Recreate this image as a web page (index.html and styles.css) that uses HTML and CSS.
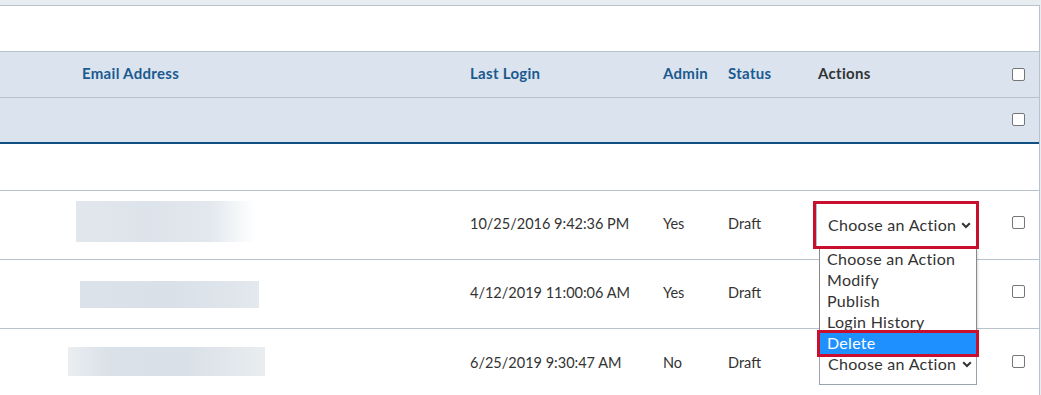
FILE: index.html
```html
<!DOCTYPE html>
<html lang="en">
<head>
<meta charset="utf-8">
<title>Users</title>
<link rel="stylesheet" href="styles.css">
</head>
<body>
<div class="page">
  <div class="topbar"></div>
  <div class="panel">
    <div class="spacer"></div>
    <div class="row head head-1">
      <div></div>
      <div class="th email">Email Address</div>
      <div class="th">Last Login</div>
      <div class="th">Admin</div>
      <div class="th">Status</div>
      <div class="th dark actions-h">Actions</div>
      <div class="cb-cell"><span class="cb"></span></div>
    </div>
    <div class="row head head-2">
      <div></div><div></div><div></div><div></div><div></div><div></div>
      <div class="cb-cell"><span class="cb"></span></div>
    </div>
    <div class="row blank"></div>
    <div class="row data">
      <div></div>
      <div class="blur-cell"><span class="blur b1"></span></div>
      <div class="td">10/25/2016 9:42:36 PM</div>
      <div class="td">Yes</div>
      <div class="td">Draft</div>
      <div class="act">
        <div class="focus-box">
          <div class="select open">
            <span class="sel-text">Choose an Action</span>
            <svg class="chev" width="10" height="7" viewBox="0 0 10 7"><path d="M1.2 1.2 L5 5 L8.8 1.2" fill="none" stroke="#333" stroke-width="2"/></svg>
          </div>
          <ul class="listbox">
            <li>Choose an Action</li>
            <li>Modify</li>
            <li>Publish</li>
            <li>Login History</li>
            <li class="hl">Delete</li>
          </ul>
        </div>
      </div>
      <div class="cb-cell"><span class="cb"></span></div>
    </div>
    <div class="row data">
      <div></div>
      <div class="blur-cell"><span class="blur b2"></span></div>
      <div class="td">4/12/2019 11:00:06 AM</div>
      <div class="td">Yes</div>
      <div class="td">Draft</div>
      <div class="act"></div>
      <div class="cb-cell"><span class="cb"></span></div>
    </div>
    <div class="row data last">
      <div></div>
      <div class="blur-cell"><span class="blur b3"></span></div>
      <div class="td">6/25/2019 9:30:47 AM</div>
      <div class="td">No</div>
      <div class="td">Draft</div>
      <div class="act">
        <div class="select plain">
          <span class="sel-text">Choose an Action</span>
          <svg class="chev" width="10" height="7" viewBox="0 0 10 7"><path d="M1.2 1.2 L5 5 L8.8 1.2" fill="none" stroke="#333" stroke-width="2"/></svg>
        </div>
      </div>
      <div class="cb-cell"><span class="cb"></span></div>
    </div>
  </div>
</div>
</body>
</html>
```

FILE: styles.css
```css
* { box-sizing: border-box; }
html, body { margin: 0; padding: 0; }
body {
  background: #e8edf1;
  font-family: "Lato", "Liberation Sans", sans-serif;
  color: #333;
  height: 395px;
  overflow: hidden;
}
.page { width: 1040px; }
.topbar {
  height: 6px;
  border-bottom: 1px solid #b8c2cc;
  background: #e8edf1;
}
.panel {
  background: #fff;
  border-right: 1px solid #b8c2cc;
  height: 389px;
}
.spacer { height: 45px; }
.row {
  display: grid;
  grid-template-columns: 68px 402px 193px 65px 85px 199px 1fr;
  align-items: center;
}
.head {
  background: #dae3ee;
  height: 46px;
  border-top: 1px solid #b8c2cc;
  padding-bottom: 2px;
}
.head-2 { height: 47px; border-bottom: 2px solid #0f4f82; }
.th {
  font-size: 15px;
  letter-spacing: 0.3px;
  font-weight: 700;
  color: #1b5a8e;
  padding-bottom: 2px;
}
.th.email { padding-left: 14px; }
.th.dark { color: #333; }
.actions-h { padding-left: 5px; }
.blank { height: 47px; border-bottom: 1px solid #b8c2cc; }
.data {
  height: 69px;
  border-bottom: 1px solid #b8c2cc;
  font-size: 14.5px;
}
.data.last { border-bottom: none; }
.td { padding-bottom: 3px; }
.cb-cell { display: flex; align-items: center; }
.cb {
  width: 13px; height: 13px;
  border: 1px solid #767676;
  border-radius: 2px;
  background: #fff;
  display: block;
}
.head .cb { margin-top: 1px; }
.data .cb { margin-top: -5px; }
.blur-cell { position: relative; height: 100%; }
.blur { position: absolute; display: block; }
.b1 {
  left: 8px; top: 10px; width: 179px; height: 41px;
  background: linear-gradient(90deg, #e2e7ed 0%, #dde3ea 40%, #e3e8ee 75%, #ffffff 100%);
}
.b2 {
  left: 12px; top: 21px; width: 179px; height: 27px;
  background: linear-gradient(90deg, #dbe2e9 0%, #d9e0e8 50%, #dfe5eb 85%, #e4e9ee 100%);
}
.b3 {
  left: 0; top: 18px; width: 197px; height: 29px;
  background: linear-gradient(90deg, #eaeef1 0%, #dae1e8 20%, #d9e0e7 60%, #e9edf0 100%);
}
.act { display: flex; align-items: center; }
.focus-box {
  position: relative;
  width: 166px; height: 48px;
  border: 3px solid #c8102e;
}
.select {
  display: flex;
  align-items: center;
  justify-content: space-between;
  background: #fff;
  font-size: 16px;
  letter-spacing: 0.3px;
  color: #333;
}
.select.open {
  height: 100%;
  padding: 0 5px 0 12px;
  box-shadow: inset 1px 0 0 #a9c4e0;
}
.select.plain {
  width: 158px; height: 40px;
  margin-left: 6px; margin-top: 2px;
  border: 1px solid #9aa3ad;
  padding: 0 4px 0 8px;
}
.sel-text { padding-bottom: 2px; white-space: nowrap; }
.chev { display: block; flex: none; }
.listbox {
  position: absolute;
  left: 3px; top: 45px;
  width: 158px;
  margin: 0; padding: 0;
  list-style: none;
  background: #fff;
  border: 1px solid #8a8a8a;
  border-top: none;
  z-index: 5;
  font-size: 16px;
  letter-spacing: 0.3px;
  color: #333;
  box-shadow: 1px 1px 2px rgba(0,0,0,0.15);
}
.listbox li {
  height: 21px;
  line-height: 19px;
  padding-left: 7px;
  white-space: nowrap;
}
.listbox li.hl {
  background: #1e90ff;
  color: #fff;
  outline: 3px solid #c8102e;
}
```
